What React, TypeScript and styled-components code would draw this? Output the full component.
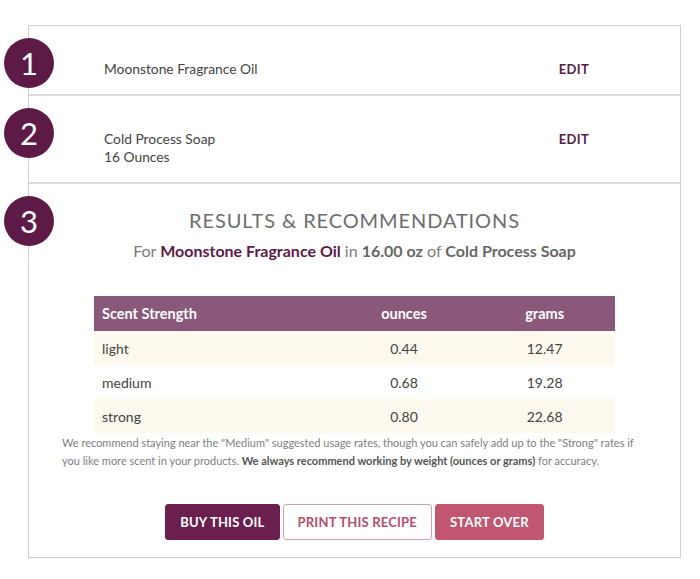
import styled, { createGlobalStyle } from "styled-components";

const GlobalStyle = createGlobalStyle`
  body {
    margin: 0;
    background: #ffffff;
    font-family: 'Lato', 'Liberation Sans', sans-serif;
    color: #444;
  }
`;

const rows = [
    { strength: "light", ounces: "0.44", grams: "12.47" },
    { strength: "medium", ounces: "0.68", grams: "19.28" },
    { strength: "strong", ounces: "0.80", grams: "22.68" },
];

const App = () => {
    return (
        <Page>
            <GlobalStyle/>
            <Box>
                <Step>
                    <Num>1</Num>
                    <StepBody>
                        <StepText>Moonstone Fragrance Oil</StepText>
                        <Edit>EDIT</Edit>
                    </StepBody>
                </Step>
                <Step>
                    <Num>2</Num>
                    <StepBody>
                        <StepText>
                            Cold Process Soap<br/>
                            16 Ounces
                        </StepText>
                        <Edit>EDIT</Edit>
                    </StepBody>
                </Step>
                <Step $last>
                    <Num>3</Num>
                    <Results>
                        <Title>RESULTS &amp; RECOMMENDATIONS</Title>
                        <Sub>
                            For <Plum>Moonstone Fragrance Oil</Plum> in <b>16.00 oz</b> of <b>Cold Process Soap</b>
                        </Sub>
                        <Table>
                            <thead>
                            <tr>
                                <Th>Scent Strength</Th>
                                <Th $center>ounces</Th>
                                <Th $center>grams</Th>
                            </tr>
                            </thead>
                            <tbody>
                            {rows.map((r, i) => (
                                <Tr key={r.strength} $shaded={i % 2 === 0}>
                                    <Td>{r.strength}</Td>
                                    <Td $center>{r.ounces}</Td>
                                    <Td $center>{r.grams}</Td>
                                </Tr>
                            ))}
                            </tbody>
                        </Table>
                        <Note>
                            We recommend staying near the "Medium" suggested usage rates, though you can safely add up to
                            the "Strong" rates if you like more scent in your products. <strong>We always recommend working by
                            weight (ounces or grams)</strong> for accuracy.
                        </Note>
                        <Buttons>
                            <Button $kind="buy">BUY THIS OIL</Button>
                            <Button $kind="print">PRINT THIS RECIPE</Button>
                            <Button $kind="reset">START OVER</Button>
                        </Buttons>
                    </Results>
                </Step>
            </Box>
        </Page>
    );
};

export default App;

const Page = styled.div`
  padding: 25px 0 22px 28px;
  width: 700px;
  box-sizing: border-box;
`

const Box = styled.div`
  width: 653px;
  border: 1px solid #cfcfcf;
  box-sizing: border-box;
  background: #fff;
`

const Step = styled.div<{ $last?: boolean }>`
  position: relative;
  border-bottom: ${p => p.$last ? "none" : "2px solid #dcdcdc"};
`

const Num = styled.div`
  position: absolute;
  left: -25px;
  top: 12px;
  width: 50px;
  height: 50px;
  border-radius: 50%;
  background: #5e1a47;
  color: #fff;
  display: flex;
  align-items: center;
  justify-content: center;
  font-size: 31px;
  font-weight: 400;
`

const StepBody = styled.div`
  display: flex;
  justify-content: space-between;
  align-items: flex-start;
  padding: 34px 91px 16px 75px;
`

const StepText = styled.div`
  font-size: 13.8px;
  line-height: 18px;
  color: #444;
`

const Edit = styled.a`
  font-size: 13px;
  line-height: 18px;
  font-weight: 700;
  color: #5e1a47;
  letter-spacing: 0.3px;
  cursor: pointer;
`

const Results = styled.div`
  display: flex;
  flex-direction: column;
  align-items: center;
  padding: 23px 0 17px;
`

const Title = styled.h2`
  margin: 0;
  font-size: 20px;
  line-height: 26px;
  font-weight: 400;
  letter-spacing: 0.9px;
  color: #6d6d6d;
`

const Sub = styled.p`
  margin: 8px 0 0;
  font-size: 16px;
  line-height: 20px;
  color: #7a7a7a;

  b {
    font-weight: 700;
    color: #666;
  }
`

const Plum = styled.b`
  && {
    color: #5e1a47;
  }
`

const Table = styled.table`
  margin-top: 35px;
  width: 521px;
  border-collapse: collapse;
  font-size: 14px;
`

const Th = styled.th<{ $center?: boolean }>`
  background: #8a5878;
  color: #fff;
  font-weight: 700;
  font-size: 14.5px;
  height: 35px;
  padding: 0 8px;
  text-align: ${p => p.$center ? "center" : "left"};
  width: ${p => p.$center ? "27%" : "46%"};
`

const Tr = styled.tr<{ $shaded: boolean }>`
  background: ${p => p.$shaded ? "#fdf9ef" : "#fff"};
`

const Td = styled.td<{ $center?: boolean }>`
  height: 34px;
  padding: 0 8px;
  color: #444;
  text-align: ${p => p.$center ? "center" : "left"};
`

const Note = styled.p`
  align-self: stretch;
  margin: 0;
  padding: 1px 33px 0 33px;
  font-size: 11px;
  line-height: 18px;
  color: #808080;

  strong {
    color: #555;
  }
`

const kinds = {
    buy: { bg: "#6b1f4f", fg: "#fff", border: "#6b1f4f" },
    print: { bg: "#fff", fg: "#b54e6d", border: "#d4a0b0" },
    reset: { bg: "#c0566f", fg: "#fff", border: "#c0566f" },
};

const Buttons = styled.div`
  display: flex;
  gap: 3px;
  margin-top: 34px;
`

const Button = styled.button<{ $kind: keyof typeof kinds }>`
  height: 36px;
  padding: 0 14px;
  border-radius: 3px;
  border: 1px solid ${p => kinds[p.$kind].border};
  background: ${p => kinds[p.$kind].bg};
  color: ${p => kinds[p.$kind].fg};
  font-family: 'Lato', 'Liberation Sans', sans-serif;
  font-weight: 700;
  font-size: 13px;
  letter-spacing: 0.2px;
  cursor: pointer;
`
